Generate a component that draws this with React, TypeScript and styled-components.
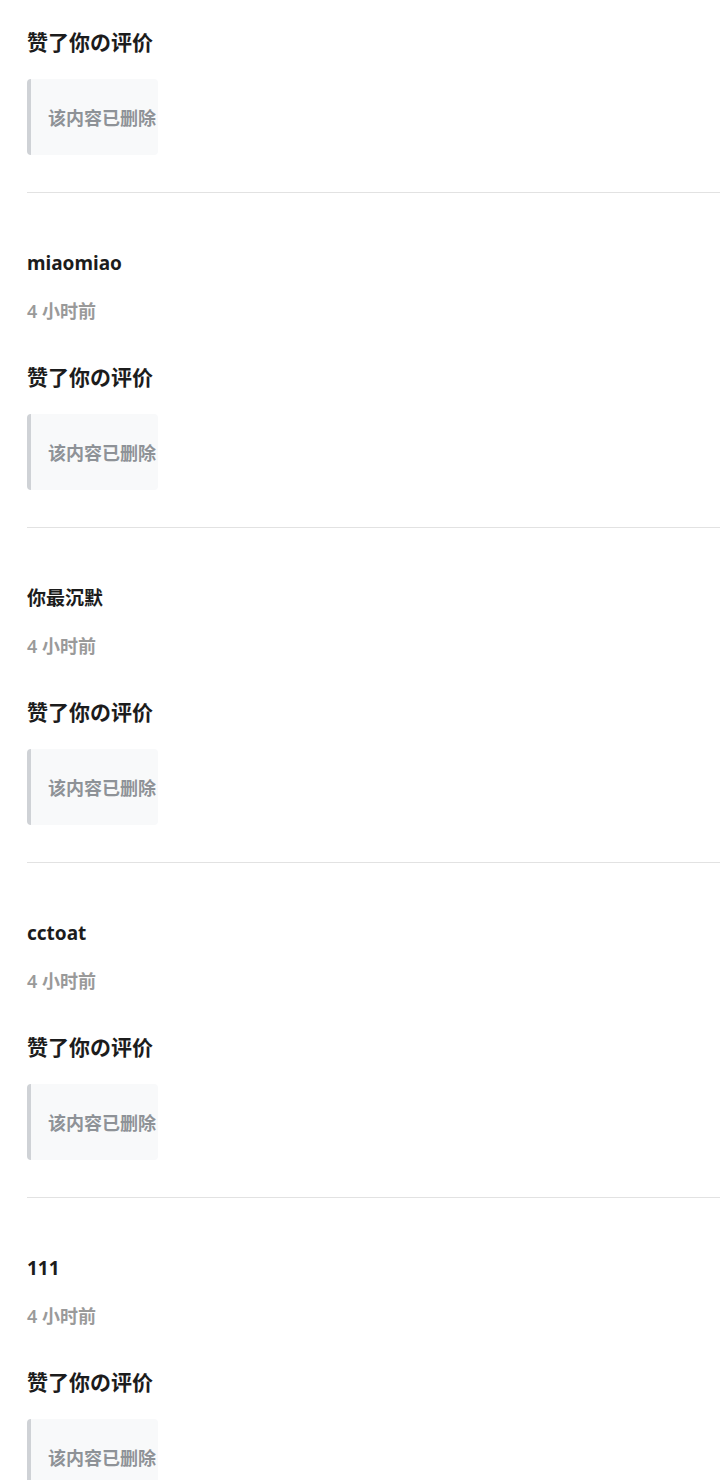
import React from 'react';
import styled, { createGlobalStyle } from 'styled-components';

interface INotice {
  id: number;
  user?: string;
  time?: string;
  action: string;
  quote: string;
}

const notices: INotice[] = [
  { id: 0, action: '赞了你の评价', quote: '该内容已删除' },
  { id: 1, user: 'miaomiao', time: '4 小时前', action: '赞了你の评价', quote: '该内容已删除' },
  { id: 2, user: '你最沉默', time: '4 小时前', action: '赞了你の评价', quote: '该内容已删除' },
  { id: 3, user: 'cctoat', time: '4 小时前', action: '赞了你の评价', quote: '该内容已删除' },
  { id: 4, user: '111', time: '4 小时前', action: '赞了你の评价', quote: '该内容已删除' },
];

const App: React.FC = () => {
  return (
    <>
      <GlobalStyle />
      <List>
        {notices.map((notice) => (
          <Item key={notice.id} $partial={!notice.user}>
            {notice.user && <UserName>{notice.user}</UserName>}
            {notice.time && <Time>{notice.time}</Time>}
            <Action>{notice.action}</Action>
            <Quote>{notice.quote}</Quote>
          </Item>
        ))}
      </List>
    </>
  );
};

const GlobalStyle = createGlobalStyle`
  body {
    margin: 0;
    background: #ffffff;
    font-family: "Noto Sans", "Noto Sans CJK SC", sans-serif;
  }
`;

const List = styled.div`
  display: flex;
  flex-direction: column;
  padding: 28px 0 0 27px;
`;

const Item = styled.div<{ $partial: boolean }>`
  display: flex;
  flex-direction: column;
  align-items: flex-start;
  padding: ${(p) => (p.$partial ? '0' : '58px')} 0 37px;
  border-bottom: 1px solid #e2e2e2;
`;

const UserName = styled.div`
  font-size: 19px;
  line-height: 24px;
  font-weight: 700;
  color: #1c1c1c;
`;

const Time = styled.div`
  margin-top: 25px;
  font-size: 18px;
  line-height: 22px;
  font-weight: 600;
  color: #9a9a9a;
`;

const Action = styled.div`
  margin-top: 41px;
  font-family: "Noto Sans CJK SC", sans-serif;
  font-size: 21px;
  line-height: 26px;
  font-weight: 700;
  color: #1c1c1c;

  ${Item}:first-child & {
    margin-top: 0;
  }
`;

const Quote = styled.div`
  margin-top: 25px;
  height: 76px;
  display: flex;
  align-items: center;
  padding: 0 2px 0 17px;
  border-left: 4px solid #cfd2d6;
  border-radius: 4px;
  background: #f8f9fa;
  font-family: "Noto Sans CJK SC", sans-serif;
  font-size: 18px;
  font-weight: 600;
  color: #8e9297;
`;

export default App;
